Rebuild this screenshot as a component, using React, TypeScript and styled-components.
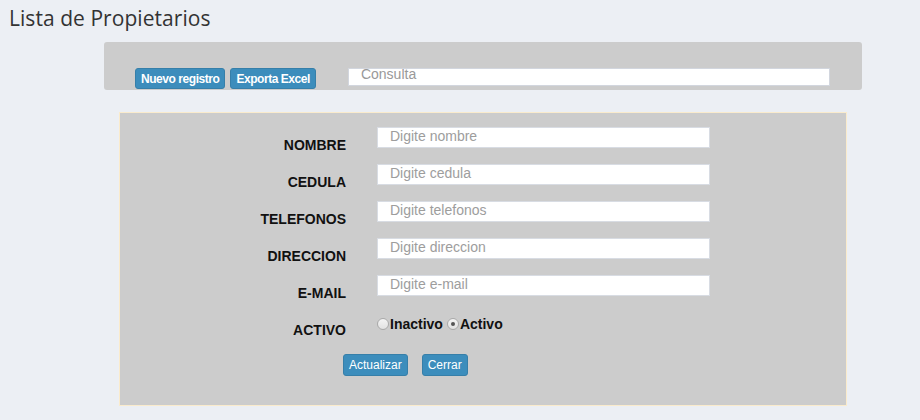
import React from "react";
import styled, { createGlobalStyle } from "styled-components";

const Global = createGlobalStyle`
  html, body { margin: 0; padding: 0; background: #eceff4; }
  body { font-family: "Liberation Sans", Arial, sans-serif; }
  * { box-sizing: border-box; }
`;

const Page = styled.div`
  width: 920px;
  height: 420px;
  background: #eceff4;
  overflow: hidden;
`;

const Title = styled.h1`
  margin: 0;
  padding: 4px 0 0 9px;
  height: 42px;
  font-family: "Open Sans", sans-serif;
  font-weight: 400;
  font-size: 21px;
  line-height: 28px;
  letter-spacing: 0.05px;
  color: #333;
`;

const Toolbar = styled.div`
  margin-left: 104px;
  width: 758px;
  height: 48px;
  background: #cccccc;
  border-radius: 3px;
  display: flex;
  align-items: flex-start;
  padding: 26px 0 0 31px;
`;

const Btn = styled.button<{ $bold?: boolean }>`
  height: ${(p) => (p.$bold ? "21px" : "22px")};
  padding: 0 5px;
  background: #3c8dbc;
  border: 1px solid #367fa9;
  border-radius: 3px;
  color: #fff;
  font-family: "Liberation Sans", Arial, sans-serif;
  font-size: 12px;
  font-weight: ${(p) => (p.$bold ? 700 : 400)};
  letter-spacing: ${(p) => (p.$bold ? "-0.45px" : "0")};
  line-height: 18px;
  cursor: pointer;
  white-space: nowrap;
`;

const BtnGroup = styled.div`
  display: flex;
  gap: 5px;
`;

const Search = styled.input`
  margin-left: 32px;
  width: 482px;
  height: 18px;
  padding: 0 12px 6px;
  border: 1px solid #d2d6de;
  background: #fff;
  font-family: "Liberation Sans", Arial, sans-serif;
  font-size: 14px;
  outline: none;
  &::placeholder { color: #999; }
`;

const Panel = styled.div`
  margin: 22px 0 0 119px;
  width: 728px;
  height: 294px;
  background: #cccccc;
  border: 1px solid #faebcc;
  padding-top: 14px;
`;

const Row = styled.div`
  display: flex;
  align-items: flex-start;
  height: 21px;
  margin-bottom: 16px;
`;

const Label = styled.label`
  width: 226px;
  margin-top: 10px;
  text-align: right;
  font-size: 14px;
  font-weight: 700;
  line-height: 16px;
  color: #111;
`;

const Field = styled.input`
  margin-left: 31px;
  width: 333px;
  height: 21px;
  padding: 0 12px 3px;
  border: 1px solid #d8dce3;
  background: #fff;
  font-family: "Liberation Sans", Arial, sans-serif;
  font-size: 14px;
  outline: none;
  &::placeholder { color: #9d9d9d; }
`;

const Radios = styled.div`
  margin-left: 31px;
  margin-top: 4px;
  display: flex;
  align-items: center;
`;

const RadioOption = styled.label`
  display: flex;
  align-items: center;
  font-size: 14px;
  font-weight: 700;
  line-height: 16px;
  color: #111;
  margin-right: 4px;
`;

const Radio = styled.input`
  appearance: none;
  margin: 0 1px 0 0;
  width: 12px;
  height: 12px;
  border-radius: 50%;
  border: 1px solid #a9a9a9;
  background: linear-gradient(#f4f4f4, #e2e2e2);
  position: relative;
  &:checked::after {
    content: "";
    position: absolute;
    left: 3px;
    top: 3px;
    width: 4px;
    height: 4px;
    border-radius: 50%;
    background: #555;
  }
`;

const Actions = styled.div`
  display: flex;
  gap: 14px;
  margin: 21px 0 0 223px;
`;

const fields = [
  ["NOMBRE", "Digite nombre"],
  ["CEDULA", "Digite cedula"],
  ["TELEFONOS", "Digite telefonos"],
  ["DIRECCION", "Digite direccion"],
  ["E-MAIL", "Digite e-mail"],
];

export default function App() {
  return (
    <Page>
      <Global />
      <Title>Lista de Propietarios</Title>
      <Toolbar>
        <BtnGroup>
          <Btn $bold>Nuevo registro</Btn>
          <Btn $bold>Exporta Excel</Btn>
        </BtnGroup>
        <Search placeholder="Consulta" />
      </Toolbar>
      <Panel>
        {fields.map(([l, p]) => (
          <Row key={l}>
            <Label>{l}</Label>
            <Field placeholder={p} />
          </Row>
        ))}
        <Row>
          <Label>ACTIVO</Label>
          <Radios>
            <RadioOption>
              <Radio type="radio" name="activo" />
              Inactivo
            </RadioOption>
            <RadioOption>
              <Radio type="radio" name="activo" defaultChecked />
              Activo
            </RadioOption>
          </Radios>
        </Row>
        <Actions>
          <Btn>Actualizar</Btn>
          <Btn>Cerrar</Btn>
        </Actions>
      </Panel>
    </Page>
  );
}
